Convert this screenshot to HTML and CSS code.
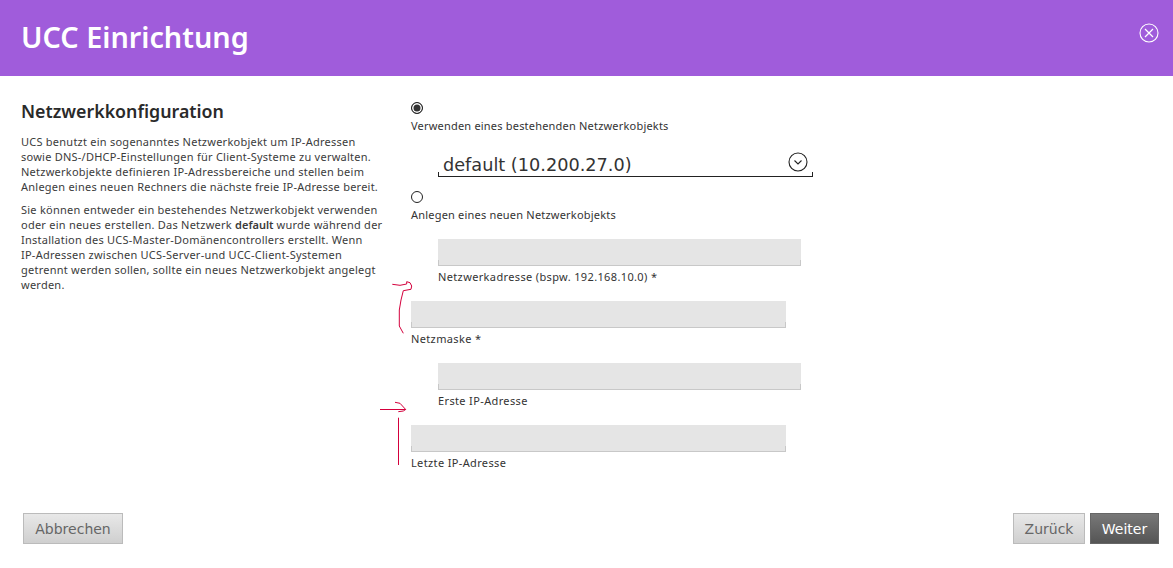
FILE: index.html
```html
<!DOCTYPE html>
<html lang="de">
<head>
<meta charset="utf-8">
<title>UCC Einrichtung</title>
<link rel="stylesheet" href="styles.css">
</head>
<body>
<div class="page">
  <header class="header">
    <h1 class="title">UCC Einrichtung</h1>
    <button class="close" aria-label="Schließen">
      <svg width="20" height="20" viewBox="0 0 20 20" fill="none" stroke="#fff" stroke-width="1.1"><circle cx="10" cy="10" r="9"/><path d="M6 6l8 8M14 6l-8 8" stroke-width="1.2"/></svg>
    </button>
  </header>
  <main class="main">
    <section class="intro">
      <h2 class="heading">Netzwerkkonfiguration</h2>
      <p class="para">UCS benutzt ein sogenanntes Netzwerkobjekt um IP-Adressen<br>sowie DNS-/DHCP-Einstellungen für Client-Systeme zu verwalten.<br>Netzwerkobjekte definieren IP-Adressbereiche und stellen beim<br>Anlegen eines neuen Rechners die nächste freie IP-Adresse bereit.</p>
      <p class="para">Sie können entweder ein bestehendes Netzwerkobjekt verwenden<br>oder ein neues erstellen. Das Netzwerk <b>default</b> wurde während der<br>Installation des UCS-Master-Domänencontrollers erstellt. Wenn<br>IP-Adressen zwischen UCS-Server-und UCC-Client-Systemen<br>getrennt werden sollen, sollte ein neues Netzwerkobjekt angelegt<br>werden.</p>
    </section>
    <form class="form">
      <div class="radio radio-on"></div>
      <div class="label">Verwenden eines bestehenden Netzwerkobjekts</div>
      <div class="select">
        <span class="select-value">default (10.200.27.0)</span>
        <svg class="select-icon" width="20" height="20" viewBox="0 0 20 20" fill="none" stroke="#222" stroke-width="1.1"><circle cx="10" cy="10" r="9"/><path d="M6.5 8.5l3.5 3.5 3.5-3.5"/></svg>
      </div>
      <div class="radio"></div>
      <div class="label">Anlegen eines neuen Netzwerkobjekts</div>
      <div class="field field-in">
        <div class="input input-short"></div>
        <div class="label label-field">Netzwerkadresse (bspw. 192.168.10.0) *</div>
      </div>
      <div class="field">
        <div class="input"></div>
        <div class="label label-field">Netzmaske *</div>
      </div>
      <div class="field field-in">
        <div class="input input-short"></div>
        <div class="label label-field">Erste IP-Adresse</div>
      </div>
      <div class="field">
        <div class="input"></div>
        <div class="label label-field">Letzte IP-Adresse</div>
      </div>
    </form>
  </main>
  <footer class="footer">
    <button class="btn btn-cancel">Abbrechen</button>
    <div class="footer-right">
      <button class="btn btn-back">Zurück</button>
      <button class="btn btn-next">Weiter</button>
    </div>
  </footer>
  <svg class="marks" width="60" height="200" viewBox="0 0 60 200" fill="none" stroke="#d4003c" stroke-width="1">
    <path d="M17.300 4.300L25 5.300L31.700 4L31.700 1.700L35 2.700L36.700 6L36 9.300L28.300 10.700L26 20L24.300 30L24.300 46L28.300 53.300"/>
    <path d="M5 129.500H30.700M20 122.300L25 123.300L30.700 129.500L28.300 131L23.300 131.700"/>
    <path d="M23.500 137.700V185"/>
  </svg>
</div>
</body>
</html>
```
FILE: styles.css
```css
* { box-sizing: border-box; }
html, body { margin: 0; padding: 0; background: #fff; }
body { font-family: "Noto Sans", sans-serif; color: #333; }
.page { position: relative; width: 1173px; height: 568px; overflow: hidden; display: flex; flex-direction: column; }
.header { height: 76px; flex: none; background: #a05cdb; display: flex; justify-content: space-between; padding: 0 14px 0 21px; }
.title { margin: 0; font: 600 28.800px/74px "Noto Sans", sans-serif; color: #fff; }
.close { margin-top: 23px; padding: 0; border: 0; width: 20px; height: 20px; background: none; }
.close svg { display: block; }
.main { flex: 1; display: flex; padding: 26px 0 0 21px; }
.intro { width: 390px; flex: none; }
.heading { margin: -1px 0 13px; font: 600 17.800px/20px "Noto Sans", sans-serif; color: #2a2a2a; }
.para { margin: 0 0 8px; font-size: 11px; line-height: 15px; letter-spacing: 0.240px; color: #3b3b3b; white-space: nowrap; }
.para b { font-weight: 600; letter-spacing: 0; }
.form { flex: none; width: 420px; }
.radio { width: 12px; height: 12px; border: 1.500px solid #222; border-radius: 50%; background: #fff; }
.radio-on { background: #333; box-shadow: inset 0 0 0 1.500px #fff; }
.label { margin-top: 4px; height: 16px; font-size: 11px; line-height: 16px; letter-spacing: 0.200px; color: #333; white-space: nowrap; }
.label-field { margin-top: 3px; letter-spacing: 0.360px; }
.select { margin: 11px 0 14px 27px; width: 375px; height: 32px; border-bottom: 1px solid #222; display: flex; justify-content: space-between;
  background: linear-gradient(#222, #222) left bottom / 1px 4px no-repeat, linear-gradient(#222, #222) right bottom / 1px 4px no-repeat; }
.select-value { align-self: flex-end; padding-left: 5px; font-family: "DejaVu Sans", sans-serif; font-size: 17.700px; line-height: 22px; color: #333; }
.select-icon { margin: 7px 5px 0 0; }
.field { margin-top: 16px; }
.field-in { margin-left: 27px; }
.input { width: 375px; height: 27px; border-bottom: 1px solid #c8c8c8;
  background: linear-gradient(#c8c8c8, #c8c8c8) left bottom / 1px 5px no-repeat, linear-gradient(#c8c8c8, #c8c8c8) right bottom / 1px 5px no-repeat, #e5e5e5; }
.input-short { width: 363px; }
.footer { flex: none; height: 55px; display: flex; justify-content: space-between; padding: 0 14px 0 23px; }
.footer-right { display: flex; gap: 5px; }
.btn { height: 31px; padding: 0; font-family: "DejaVu Sans", sans-serif; font-size: 14px; border: 1px solid #bbb; background: linear-gradient(#e8e8e8, #cfcfcf); color: #666; }
.btn-cancel { width: 100px; }
.btn-back { width: 72px; }
.btn-next { width: 69px; background: linear-gradient(#787878, #555); border-color: #666; color: #fff; }
.marks { position: absolute; left: 375px; top: 280px; }
```
